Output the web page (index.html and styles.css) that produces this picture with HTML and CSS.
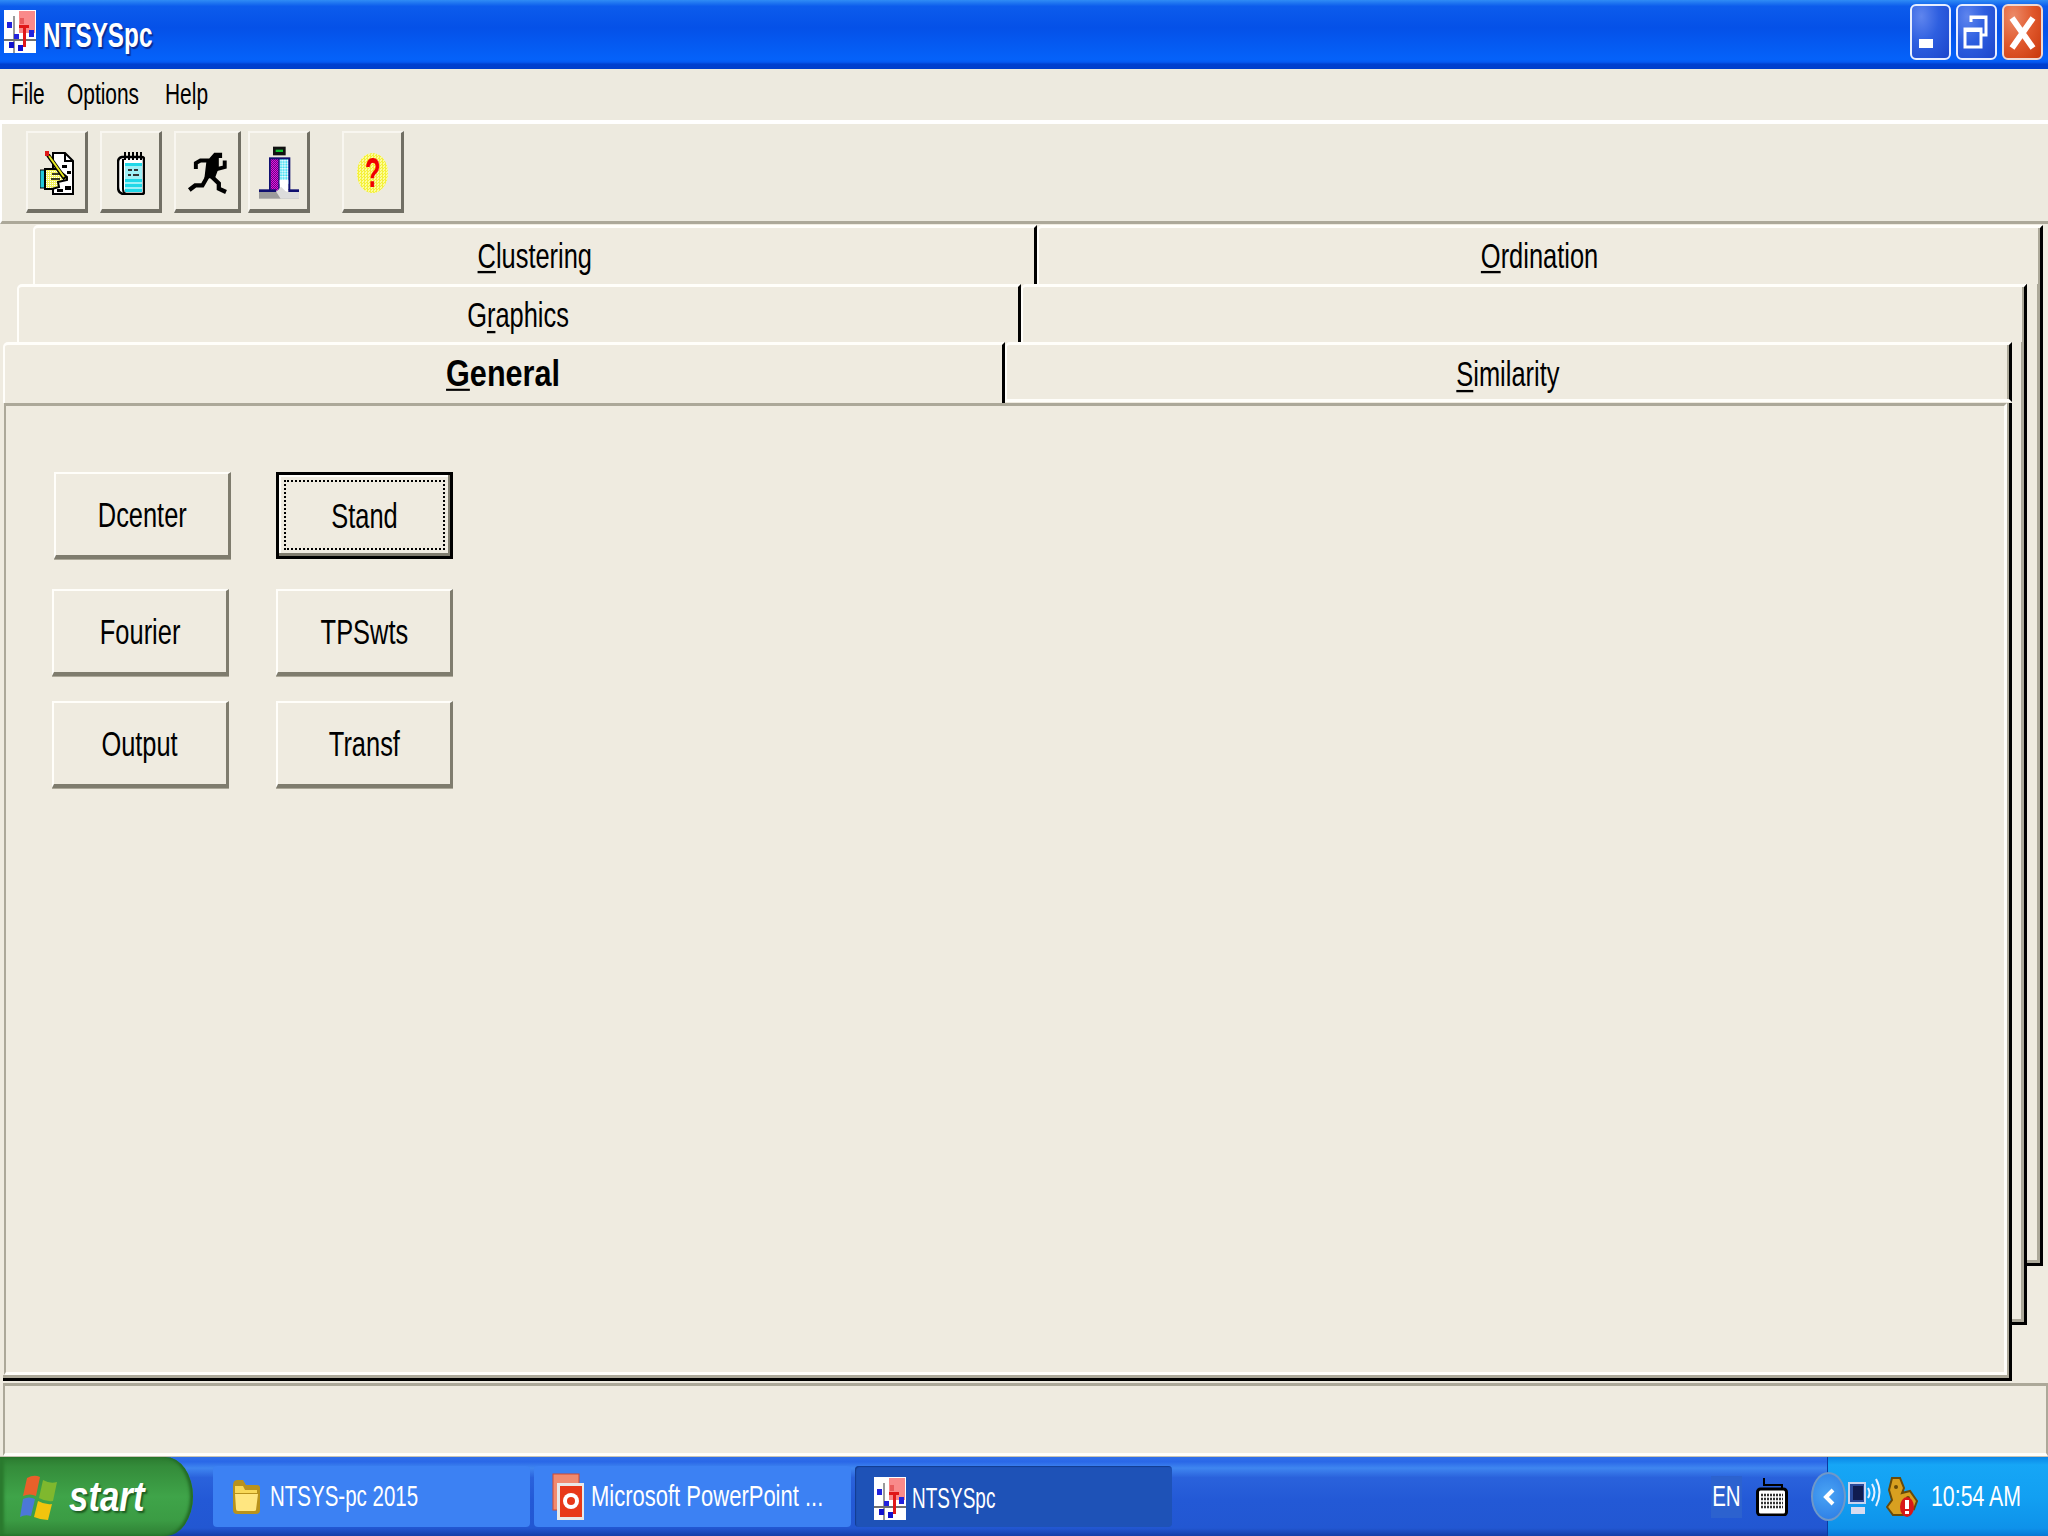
FILE: index.html
```html
<!DOCTYPE html>
<html lang="en">
<head>
<meta charset="utf-8">
<title>NTSYSpc</title>
<link rel="stylesheet" href="styles.css">
</head>
<body>
<svg class="defs" width="0" height="0" aria-hidden="true">
  <defs>
    <pattern id="dither-yellow" width="2" height="2" patternUnits="userSpaceOnUse">
      <rect width="2" height="2" fill="#f2f25a"/><rect width="1" height="1" fill="#fff"/>
    </pattern>
    <pattern id="dither-purple" width="6" height="6" patternUnits="userSpaceOnUse">
      <rect width="6" height="6" fill="#e010e0"/><rect width="3" height="3" fill="#6a0a80"/><rect x="3" y="3" width="3" height="3" fill="#6a0a80"/>
    </pattern>
    <pattern id="dither-cyan" width="8" height="8" patternUnits="userSpaceOnUse">
      <rect width="8" height="8" fill="#9ff0fa"/><rect width="4" height="4" fill="#fff"/><rect x="4" y="4" width="4" height="4" fill="#28d8f0"/>
    </pattern>
    <symbol id="app" viewBox="0 0 32 43" preserveAspectRatio="none">
      <rect width="32" height="43" fill="#fff"/>
      <rect x="15" y="1" width="16" height="22" fill="#f98a8a"/>
      <rect x="9" y="6" width="2" height="37" fill="#9a9a9a"/>
      <rect x="0" y="29" width="32" height="2" fill="#707070"/>
      <rect x="3" y="12" width="5" height="6" fill="#2222dd"/>
      <rect x="10" y="24" width="5" height="5" fill="#2222dd"/>
      <rect x="25" y="20" width="5" height="7" fill="#2222dd"/>
      <rect x="5" y="32" width="5" height="6" fill="#1111cc"/>
      <rect x="14" y="35" width="5" height="6" fill="#1111cc"/>
      <rect x="19" y="17" width="3" height="20" fill="#e01818"/>
      <rect x="15" y="15" width="10" height="3" fill="#e01818"/>
      <rect x="16" y="8" width="4" height="6" fill="#e85a5a"/>
    </symbol>
  </defs>
</svg>

<header class="titlebar">
  <svg class="title-icon"><use href="#app"/></svg>
  <span class="title-text">NTSYSpc</span>
  <div class="win-buttons">
    <div class="win-btn">
      <svg class="glyph" viewBox="0 0 41 56"><rect x="9" y="35" width="14" height="9" fill="#fff"/></svg>
    </div>
    <div class="win-btn">
      <svg class="glyph" viewBox="0 0 41 56"><path d="M15 18V13H30V31H24" fill="none" stroke="#fff" stroke-width="3"/><rect x="15" y="12" width="15" height="3" fill="#fff"/><rect x="9" y="25" width="16" height="18" fill="none" stroke="#fff" stroke-width="3"/><rect x="9" y="24" width="16" height="4" fill="#fff"/></svg>
    </div>
    <div class="win-btn win-close">
      <svg class="glyph" viewBox="0 0 41 56"><path d="M10 14L31 44M31 14L10 44" stroke="#fff" stroke-width="6" fill="none"/></svg>
    </div>
  </div>
</header>

<nav class="menubar">
  <span class="t-left">File</span>
  <span class="t-left">Options</span>
  <span class="t-left">Help</span>
</nav>

<div class="toolbar">
  <div class="tool">
    <svg class="ico ico-doc" viewBox="0 0 34 44">
      <path d="M13 2H25L33 10V43H13Z" fill="#fff" stroke="#000" stroke-width="2"/>
      <path d="M25 2V10H33" fill="none" stroke="#000" stroke-width="2"/>
      <rect x="22" y="14" width="5" height="3" fill="#000"/><rect x="27" y="20" width="4" height="3" fill="#000"/>
      <rect x="25" y="35" width="6" height="4" fill="#000"/><rect x="17" y="38" width="6" height="3" fill="#000"/>
      <path d="M0 19H5V37H0Z" fill="#22c8d8" stroke="#000" stroke-width="1"/>
      <path d="M5 18H17L27 26V29L18 31L19 36L12 38H5Z" fill="url(#dither-yellow)" stroke="#000" stroke-width="2"/>
      <path d="M12 23H24M11 28H20" stroke="#000" stroke-width="1.5"/>
      <path d="M8 4L25 28" stroke="#000" stroke-width="4"/><path d="M9 5L24 26" stroke="#e8e820" stroke-width="2"/>
      <rect x="5" y="0" width="4" height="5" fill="#e01818"/>
    </svg>
  </div>
  <div class="tool">
    <svg class="ico ico-note" viewBox="0 0 28 44">
      <path d="M5 6H25Q27 6 27 8V41Q27 43 25 43H6Q1 42 1 36V11Q1 7 5 6Z" fill="#fff" stroke="#000" stroke-width="2.5"/>
      <path d="M6 8V38Q6 42 9 43" fill="none" stroke="#000" stroke-width="2"/>
      <path d="M8 1V9M12 1V9M16 1V9M20 1V9M24 1V9" stroke="#000" stroke-width="2"/>
      <rect x="8" y="12" width="17" height="29" fill="#9ff0f6"/>
      <rect x="8" y="12" width="17" height="3" fill="#20d8e8"/><rect x="8" y="28" width="17" height="3" fill="#20d8e8"/><rect x="8" y="33" width="17" height="3" fill="#20d8e8"/><rect x="8" y="38" width="17" height="3" fill="#20d8e8"/>
      <rect x="11" y="18" width="4" height="2" fill="#333"/><rect x="17" y="18" width="4" height="2" fill="#333"/><rect x="11" y="23" width="3" height="2" fill="#333"/><rect x="16" y="23" width="6" height="2" fill="#333"/>
    </svg>
  </div>
  <div class="tool tool-wide">
    <svg class="ico ico-run" viewBox="555 455 125 130">
      <path d="M638 458H662V474H652V504L640 536H608L614 486Z" fill="#000"/>
      <path d="M622 482H596L582 490V508" fill="none" stroke="#000" stroke-width="12"/>
      <path d="M640 510L670 502V482" fill="none" stroke="#000" stroke-width="12"/>
      <path d="M618 530L602 558H580L562 572" fill="none" stroke="#000" stroke-width="13"/>
      <path d="M625 526L652 552V568L674 578" fill="none" stroke="#000" stroke-width="13"/>
    </svg>
  </div>
  <div class="tool tool-tight">
    <svg class="ico ico-tower" viewBox="780 438 120 162">
      <rect x="822" y="440" width="38" height="26" fill="#111"/>
      <rect x="830" y="449" width="22" height="7" fill="#10c030"/>
      <rect x="810" y="472" width="64" height="98" fill="#101070"/>
      <rect x="815" y="478" width="23" height="94" fill="url(#dither-purple)"/>
      <rect x="842" y="478" width="26" height="74" fill="url(#dither-cyan)"/>
      <rect x="842" y="540" width="26" height="34" fill="#fff"/>
      <rect x="780" y="568" width="52" height="8" fill="#101070"/>
      <rect x="868" y="568" width="32" height="8" fill="#101070"/>
      <rect x="780" y="576" width="120" height="20" fill="#9c9c9c"/>
      <path d="M832 576L846 560L862 576L900 576V596H845Z" fill="#dcdcdc"/>
    </svg>
  </div>
  <div class="tool tool-gap">
    <div class="help-oval"><span class="help-mark">?</span></div>
  </div>
</div>

<main class="deck">
  <div class="sheet sheet-back-1"></div>
  <div class="sheet sheet-back-2"></div>
  <div class="tab-row tab-row-1">
    <div class="tab tab-left"><span class="t"><u>C</u>lustering</span></div>
    <div class="tab tab-right"><span class="t"><u>O</u>rdination</span></div>
  </div>
  <div class="tab-row tab-row-2">
    <div class="tab tab-left"><span class="t">G<u>r</u>aphics</span></div>
    <div class="tab tab-right"></div>
  </div>
  <div class="tab-row tab-row-3">
    <div class="tab tab-left tab-active"><span class="active-label"><u>G</u>eneral</span></div>
    <div class="tab tab-right tab-sim"><span class="t"><u>S</u>imilarity</span></div>
  </div>
  <section class="panel">
    <div class="panel-inner">
      <div class="btn-row btn-row-first">
        <button class="btn btn-shift"><span class="btn-face"><span class="t">Dcenter</span></span></button>
        <button class="btn btn-focus"><span class="btn-face"><span class="t">Stand</span></span></button>
      </div>
      <div class="btn-row btn-row-mid">
        <button class="btn"><span class="btn-face"><span class="t">Fourier</span></span></button>
        <button class="btn"><span class="btn-face"><span class="t">TPSwts</span></span></button>
      </div>
      <div class="btn-row btn-row-last">
        <button class="btn"><span class="btn-face"><span class="t">Output</span></span></button>
        <button class="btn"><span class="btn-face"><span class="t">Transf</span></span></button>
      </div>
    </div>
  </section>
</main>

<div class="statusbar"></div>

<footer class="taskbar">
  <div class="start">
    <svg class="start-logo" viewBox="0 0 38 46">
      <path d="M7 4Q14 0 20 3L16 22Q10 19 3 22Z" fill="#e8602a"/>
      <path d="M23 6Q30 10 37 8L33 27Q26 28 19 24Z" fill="#7fb82e"/>
      <path d="M3 25Q9 22 15 25L11 42Q5 40 0 43Z" fill="#4c78d8"/>
      <path d="M18 27Q25 31 32 30L28 46Q21 46 14 43Z" fill="#f2c40e"/>
    </svg>
    <span class="start-text">start</span>
  </div>
  <div class="tasks">
    <div class="task">
      <svg class="task-ico task-folder" viewBox="0 0 30 38">
        <path d="M2 8Q2 2 6 2H12L15 7H26Q29 7 29 10V32Q29 36 25 36H6Q2 36 2 32Z" fill="#b8921c"/>
        <path d="M4 16H27L25 32Q25 33 23 33H7Q5 33 5 31Z" fill="#ffe680"/>
        <path d="M4 8H12L14 12H26V15H4Z" fill="#f8d858"/>
      </svg>
      <span class="t-left">NTSYS-pc 2015</span>
    </div>
    <div class="task">
      <svg class="task-ico task-ppt" viewBox="0 0 33 48">
        <rect x="1" y="1" width="26" height="36" fill="#f08a70" stroke="#d04a30"/>
        <rect x="5" y="10" width="27" height="37" fill="#e8e8e8"/>
        <rect x="8" y="13" width="22" height="31" fill="#e83818"/>
        <circle cx="19" cy="28" r="8" fill="#fff"/><circle cx="19" cy="28" r="4" fill="#e83818"/>
      </svg>
      <span class="t-left t-spread">Microsoft PowerPoint ...</span>
    </div>
    <div class="task task-active">
      <svg class="task-ico task-app"><use href="#app"/></svg>
      <span class="t-left t-slim">NTSYSpc</span>
    </div>
  </div>
  <div class="lang"><span class="t lang-text">EN</span></div>
  <svg class="kbd" viewBox="0 0 32 38">
    <path d="M8 0V7H26V11" fill="none" stroke="#000" stroke-width="2"/>
    <rect x="1.5" y="11" width="29" height="26" rx="3" fill="#fff" stroke="#000" stroke-width="3"/>
    <path d="M5 17H27M5 21H27M5 25H27M5 29H27" stroke="#333" stroke-width="2.5" stroke-dasharray="2 1"/>
  </svg>
  <div class="tray">
    <div class="chevron">
      <svg class="chevron-mark" viewBox="0 0 14 20"><path d="M11 3L4 10L11 17" fill="none" stroke="#fff" stroke-width="4"/></svg>
    </div>
    <svg class="tray-net" viewBox="0 0 33 40">
      <rect x="1" y="6" width="16" height="20" fill="#2a4a9a" stroke="#c8d4f0" stroke-width="2"/>
      <rect x="5" y="9" width="10" height="14" fill="#101c50"/>
      <rect x="3" y="30" width="14" height="7" fill="#d8dcf0"/>
      <path d="M20 11Q23 16 20 21M24 7Q29 15 24 24M28 2Q35 15 28 29" fill="none" stroke="#e8f0ff" stroke-width="2"/>
    </svg>
    <svg class="tray-key" viewBox="0 0 32 42">
      <path d="M6 2H14L18 12L16 17L24 15L31 25L28 33L22 30L17 39H7L1 31L6 24L3 14Z" fill="#d8a020" stroke="#6a4a08" stroke-width="2"/>
      <circle cx="10" cy="11" r="2" fill="#6a4a08"/><circle cx="22" cy="22" r="2" fill="#6a4a08"/>
      <ellipse cx="21" cy="31" rx="7" ry="10" fill="#d81818"/>
      <rect x="19" y="24" width="4" height="9" fill="#fff"/><rect x="19" y="35" width="4" height="3" fill="#fff"/>
    </svg>
    <span class="t-left clock">10:54 AM</span>
  </div>
</footer>
</body>
</html>
```

FILE: styles.css
```css
* { box-sizing: border-box; }

html, body {
  margin: 0;
  padding: 0;
  width: 2048px;
  height: 1536px;
  overflow: hidden;
}

body {
  background: #efebe0;
  color: #000;
  font-family: "Liberation Sans", Arial, sans-serif;
  font-size: 31px;
  display: flex;
  flex-direction: column;
}

.defs { position: absolute; }

/* The reference's bitmap font is tall and narrow */
.t {
  display: inline-block;
  transform: scale(0.82, 1.15);
}

.t-left {
  display: inline-block;
  white-space: nowrap;
  transform: scale(0.82, 1.15);
  transform-origin: left center;
}

.t-spread { transform: scale(0.88, 1.15); }
.t-slim { transform: scale(0.76, 1.15); }

u { text-underline-offset: 3px; text-decoration-thickness: 2px; }

/* Title bar */
.titlebar {
  height: 69px;
  flex: none;
  display: flex;
  align-items: center;
  padding-left: 4px;
  background: linear-gradient(#2f8cf5 0%, #0c5cec 9%, #0551e8 40%, #0562fa 86%, #0558f2 90%, #003fcf 93%, #003dcb 100%);
}

.title-icon { width: 32px; height: 43px; flex: none; margin-top: -6px; }

.title-text {
  display: inline-block;
  margin-left: 7px;
  margin-top: 2px;
  color: #fff;
  font-weight: bold;
  font-size: 32px;
  text-shadow: 2px 2px 1px #0a2a90;
  transform: scale(0.76, 1.1);
  transform-origin: left center;
}

.win-buttons {
  margin-left: auto;
  margin-right: 5px;
  margin-top: -6px;
  display: flex;
  gap: 5px;
}

.win-btn {
  width: 41px;
  height: 56px;
  border: 2px solid #e8eeff;
  border-radius: 6px;
  background: radial-gradient(ellipse at 25% 20%, #5f85ee 0%, #2e5fe0 45%, #1c46cc 100%);
}

.win-close {
  border-color: #f0d8d0;
  background: radial-gradient(ellipse at 25% 20%, #ec8a68 0%, #e0582c 50%, #c8380c 100%);
}

.glyph { display: block; margin: -2px; width: 41px; height: 56px; }

/* Menu */
.menubar {
  height: 51px;
  flex: none;
  display: grid;
  grid-template-columns: 56px 98px auto;
  justify-content: start;
  align-items: center;
  padding-left: 11px;
  background: #edeadf;
  font-size: 25.5px;
}

/* Toolbar */
.toolbar {
  height: 104px;
  flex: none;
  display: flex;
  align-items: flex-start;
  padding: 7px 0 0 24px;
  gap: 12px;
  background: #edeadf;
  border-top: 4px solid #fff;
  border-left: 2px solid #fff;
  border-bottom: 3px solid #aca899;
}

.tool {
  width: 62px;
  height: 82px;
  flex: none;
  display: flex;
  align-items: center;
  justify-content: center;
  padding-top: 3px;
  background: #edeadf;
  border-top: 2px solid #f8f6f0;
  border-left: 2px solid #f8f6f0;
  border-right: 3px solid #716f64;
  border-bottom: 4px solid #716f64;
}

.tool-wide { width: 67px; }
.tool-tight { margin-left: -5px; }
.tool-gap { margin-left: 20px; }

.ico { display: block; flex: none; }
.ico-doc { width: 34px; height: 44px; }
.ico-note { width: 28px; height: 44px; }
.ico-run { width: 41px; height: 44px; }
.ico-tower { width: 40px; height: 54px; }

.help-oval {
  width: 31px;
  height: 40px;
  display: flex;
  align-items: center;
  justify-content: center;
  border-radius: 50%;
  background: repeating-conic-gradient(#f4f03c 0 25%, #fdfc9a 0 50%) 0 0 / 3px 3px;
}

.help-mark {
  display: inline-block;
  color: #f00000;
  font-weight: bold;
  font-size: 32px;
  line-height: 1;
  transform: scale(0.8, 1.3);
}

/* Tabbed deck */
.deck {
  position: relative;
  height: 1159px;
  flex: none;
  padding-top: 1px;
  background: #efebe0;
}

.sheet {
  position: absolute;
  background: #efebe0;
  border-right: 3px solid #000;
  border-bottom: 3px solid #000;
  box-shadow: inset -3px -3px 0 #aca899;
}

.sheet-back-1 { left: 33px; top: 2px; width: 2010px; height: 1040px; }
.sheet-back-2 { left: 17px; top: 60px; width: 2010px; height: 1041px; }

.tab-row {
  position: relative;
  display: flex;
  height: 58px;
}

.tab-row-1 { margin-left: 33px; width: 2010px; height: 59px; }
.tab-row-2 { margin-left: 17px; width: 2010px; }
.tab-row-3 { margin-left: 3px; width: 2009px; height: 61px; }

.tab {
  flex: 1 1 0;
  display: flex;
  align-items: center;
  justify-content: center;
  background: #efebe0;
  border-top: 3px solid #fffefa;
  border-left: 2px solid #fffefa;
  border-right: 3px solid #000;
  border-top-left-radius: 5px;
}

.tab-left { flex: 0 0 1004px; }
.tab-row-2 .tab-left { padding-top: 2px; }
.tab-row-3 .tab-left { flex: 0 0 1002px; padding-bottom: 3px; }

.tab-right { box-shadow: inset -2px 0 0 #aca899; }

.tab-sim {
  border-bottom: 3px solid #fffefa;
  margin-bottom: 1px;
  padding-top: 5px;
}

.active-label {
  display: inline-block;
  font-weight: bold;
  font-size: 36px;
  transform: scale(0.85, 1.05);
}

.panel {
  position: relative;
  margin-left: 3px;
  width: 2009px;
  height: 978px;
  border-right: 3px solid #000;
  border-bottom: 3px solid #000;
  background: #efebe0;
  box-shadow: inset -2px -3px 0 #aca899;
}

.panel-inner {
  height: calc(100% - 3px);
  width: calc(100% - 3px);
  margin-left: 1px;
  padding: 66px 0 0 46px;
  border-top: 3px solid #aca899;
  border-left: 2px solid #aca899;
  border-right: 3px solid #fffefa;
  border-bottom: 3px solid #fffefa;
}

.btn-row {
  display: flex;
  gap: 47px;
}

.btn-row-mid { margin-top: 30px; }
.btn-row-last { margin-top: 25px; }

.btn {
  width: 177px;
  height: 87px;
  padding: 0;
  flex: none;
  font: inherit;
  color: #000;
  background: #efebe0;
  border-top: 2px solid #fffefa;
  border-left: 2px solid #fffefa;
  border-right: 3px solid #7f7c6e;
  border-bottom: 4px solid #7f7c6e;
  box-shadow: 0 1px 0 #aca899;
}

.btn-face {
  display: flex;
  height: 100%;
  align-items: center;
  justify-content: center;
  padding-top: 3px;
}

.btn-shift { margin-left: 2px; margin-right: -2px; }

.btn-focus {
  border: 3px solid #000;
  padding: 5px 5px 6px 5px;
  box-shadow: inset -2px -3px 0 #7f7c6e, inset 2px 2px 0 #fffefa;
}

.btn-focus .btn-face { border: 2px dotted #000; }

/* Status bar */
.statusbar {
  height: 73px;
  flex: none;
  background: #efebe0;
  margin-left: 3px;
  border-top: 3px solid #aca899;
  border-left: 2px solid #aca899;
  border-right: 2px solid #aca899;
  border-bottom: 3px solid #fffefa;
  box-shadow: 0 -2px 0 #fffefa;
}

/* Taskbar */
.taskbar {
  height: 80px;
  flex: none;
  display: flex;
  align-items: center;
  color: #fff;
  font-size: 25px;
  background: linear-gradient(#2f6fe8 0%, #2a68e8 6%, #3f86f0 14%, #2a62dc 26%, #2359d6 55%, #2257d2 90%, #143ea8 100%);
  border-top: 1px solid #c8c4b4;
}

.start {
  width: 193px;
  height: 100%;
  flex: none;
  display: flex;
  align-items: center;
  gap: 11px;
  padding-left: 20px;
  background: linear-gradient(#2b7a2f 0%, #348c3a 12%, #3fa449 50%, #3b9c44 80%, #2e7f33 100%);
  border-radius: 0 42px 42px 0 / 0 60px 60px 0;
  box-shadow: inset -3px 0 3px #236a26, inset 4px 0 3px #2a7a2e;
}

.start-logo { width: 38px; height: 46px; flex: none; }

.start-text {
  display: inline-block;
  font-weight: bold;
  font-style: italic;
  font-size: 41px;
  text-shadow: 2px 2px 2px #1c5a20;
  transform: scale(0.85, 1.05);
  transform-origin: left center;
}

.tasks {
  display: flex;
  gap: 4px;
  margin-left: 20px;
  height: 61px;
}

.task {
  width: 317px;
  height: 100%;
  flex: none;
  display: flex;
  align-items: center;
  gap: 6px;
  padding-left: 18px;
  border-radius: 4px;
  background: #3c81f3;
  overflow: hidden;
}

.task-active {
  background: #1e52b7;
  box-shadow: inset 1px 1px 1px #123c90;
  padding: 4px 0 0 19px;
}

.task-ico { display: block; flex: none; }
.task-folder { width: 30px; height: 38px; margin-right: 3px; }
.task-ppt { width: 33px; height: 48px; }
.task-app { width: 32px; height: 43px; }

.lang {
  margin-left: auto;
  width: 31px;
  height: 42px;
  flex: none;
  display: flex;
  align-items: center;
  justify-content: center;
  background: #2c62cf;
}

.lang-text { font-size: 25px; }

.kbd { width: 32px; height: 38px; flex: none; margin-left: 14px; margin-right: 39px; }

.tray {
  position: relative;
  width: 221px;
  height: 100%;
  flex: none;
  display: flex;
  align-items: center;
  padding-left: 20px;
  background: linear-gradient(#0b86e6 0%, #16a6f6 10%, #12a0f2 50%, #0e92ea 90%, #0a78d6 100%);
  border-left: 1px solid #0c3aa0;
}

.chevron {
  position: absolute;
  left: -17px;
  top: 15px;
  width: 35px;
  height: 49px;
  border-radius: 50%;
  display: flex;
  align-items: center;
  justify-content: center;
  background: radial-gradient(circle at 45% 45%, #4aa4f4, #2a7ae4);
  border: 2px solid #6f98c8;
}

.chevron-mark { width: 14px; height: 20px; }
.tray-net { width: 33px; height: 40px; flex: none; }
.tray-key { width: 32px; height: 42px; flex: none; margin-left: 5px; }
.clock { margin-left: 13px; font-size: 26px; }
```
